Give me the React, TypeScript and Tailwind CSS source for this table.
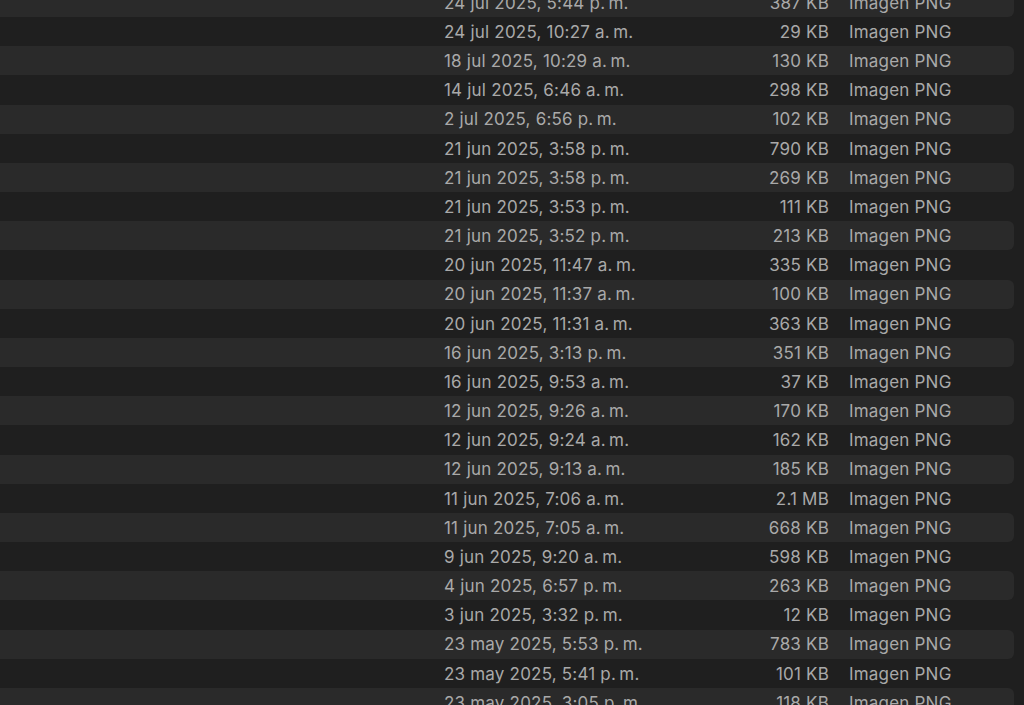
import React from "react";

const rows: [string, string][] = [
  ["24 jul 2025, 5:44 p.\u202Fm.", "387 KB"],
  ["24 jul 2025, 10:27 a.\u202Fm.", "29 KB"],
  ["18 jul 2025, 10:29 a.\u202Fm.", "130 KB"],
  ["14 jul 2025, 6:46 a.\u202Fm.", "298 KB"],
  ["2 jul 2025, 6:56 p.\u202Fm.", "102 KB"],
  ["21 jun 2025, 3:58 p.\u202Fm.", "790 KB"],
  ["21 jun 2025, 3:58 p.\u202Fm.", "269 KB"],
  ["21 jun 2025, 3:53 p.\u202Fm.", "111 KB"],
  ["21 jun 2025, 3:52 p.\u202Fm.", "213 KB"],
  ["20 jun 2025, 11:47 a.\u202Fm.", "335 KB"],
  ["20 jun 2025, 11:37 a.\u202Fm.", "100 KB"],
  ["20 jun 2025, 11:31 a.\u202Fm.", "363 KB"],
  ["16 jun 2025, 3:13 p.\u202Fm.", "351 KB"],
  ["16 jun 2025, 9:53 a.\u202Fm.", "37 KB"],
  ["12 jun 2025, 9:26 a.\u202Fm.", "170 KB"],
  ["12 jun 2025, 9:24 a.\u202Fm.", "162 KB"],
  ["12 jun 2025, 9:13 a.\u202Fm.", "185 KB"],
  ["11 jun 2025, 7:06 a.\u202Fm.", "2.1 MB"],
  ["11 jun 2025, 7:05 a.\u202Fm.", "668 KB"],
  ["9 jun 2025, 9:20 a.\u202Fm.", "598 KB"],
  ["4 jun 2025, 6:57 p.\u202Fm.", "263 KB"],
  ["3 jun 2025, 3:32 p.\u202Fm.", "12 KB"],
  ["23 may 2025, 5:53 p.\u202Fm.", "783 KB"],
  ["23 may 2025, 5:41 p.\u202Fm.", "101 KB"],
  ["23 may 2025, 3:05 p.\u202Fm.", "118 KB"],
];

export default function App() {
  return (
    <div
      className="w-[1024px] h-[705px] overflow-hidden bg-[#1f1f1f] text-[#a9a9a9] text-[17px] tracking-[0.2px]"
      style={{ fontFamily: "Inter, 'Noto Sans', sans-serif" }}
    >
      <div className="mt-[-12.18px] flex flex-col">
        {rows.map(([date, size], i) => (
          <div
            key={i}
            className={
              "h-[29.18px] shrink-0 flex items-center pt-[2px] " +
              (i % 2 === 0 ? "bg-[#2a2a2a] rounded-r-[6px] mr-[10px]" : "")
            }
          >
            <div className="w-[444px] shrink-0" />
            <div className="w-[270px] shrink-0 whitespace-nowrap">{date}</div>
            <div className="w-[115px] shrink-0 text-right whitespace-nowrap">{size}</div>
            <div className="w-[20px] shrink-0" />
            <div className="whitespace-nowrap">Imagen PNG</div>
          </div>
        ))}
      </div>
    </div>
  );
}
